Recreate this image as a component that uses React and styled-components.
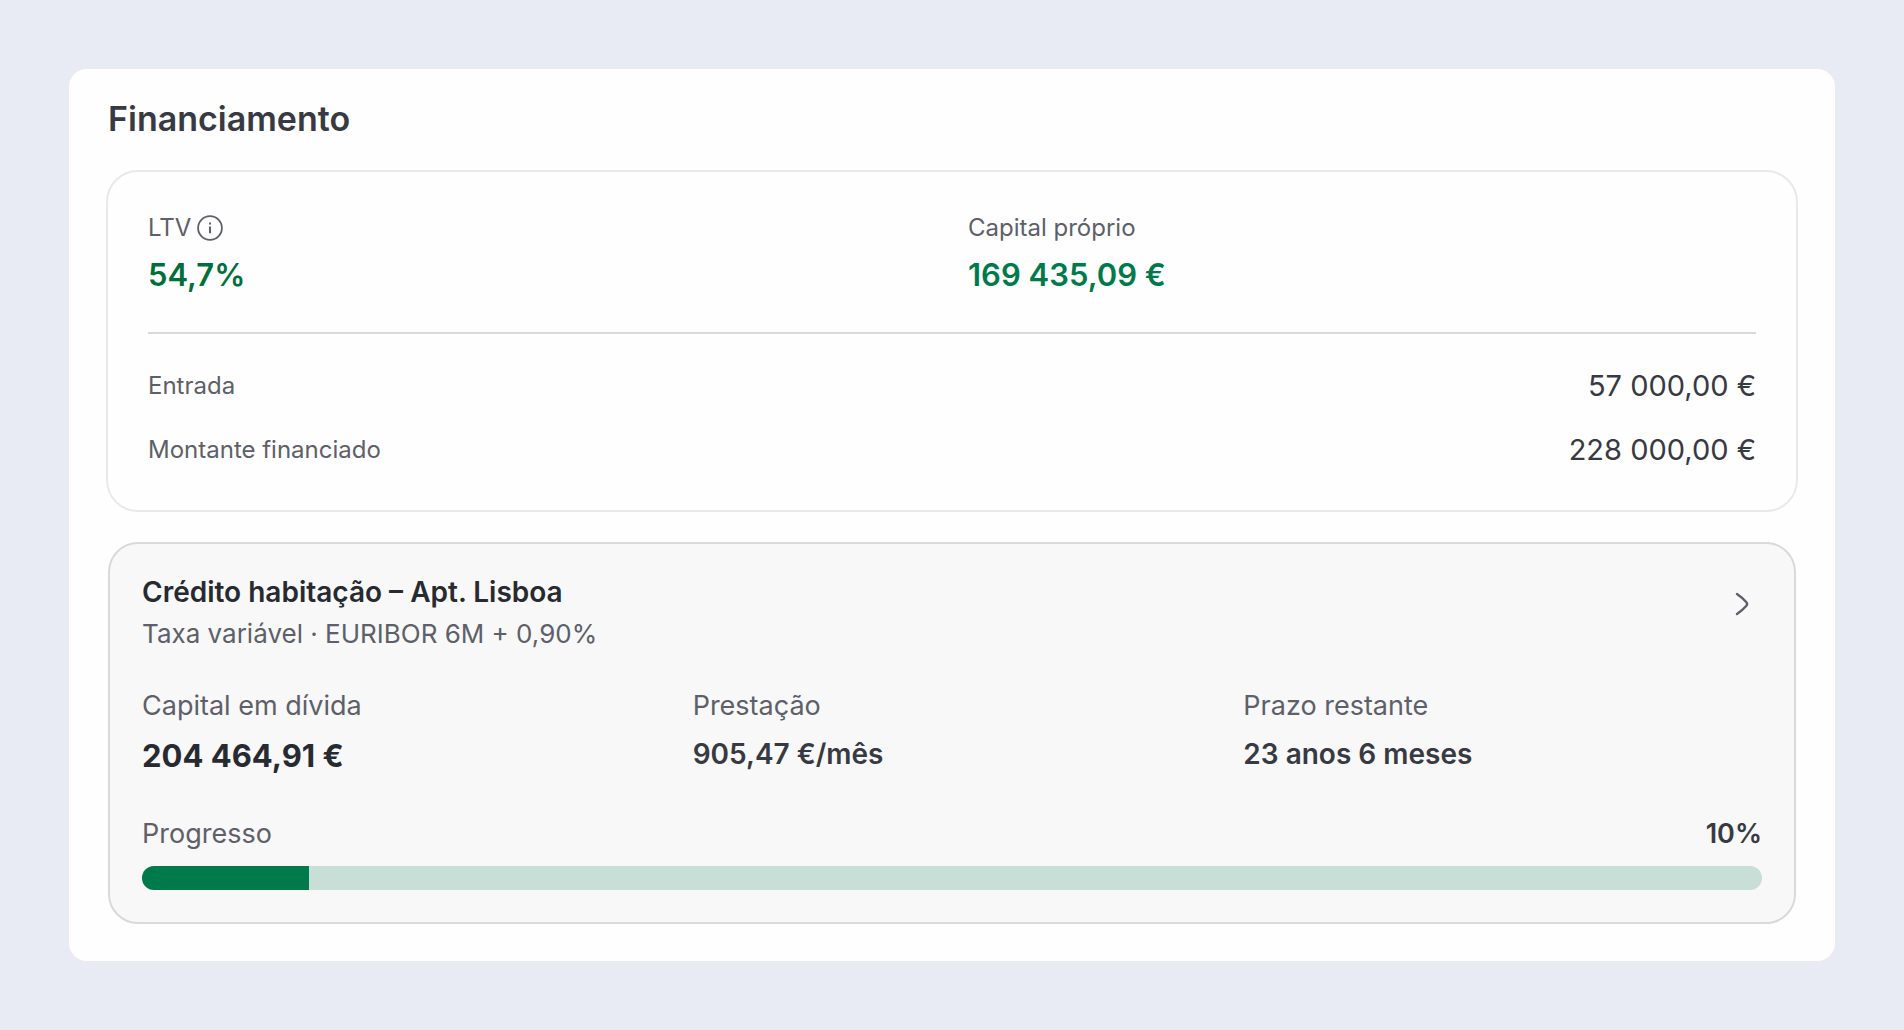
import React from 'react';
import styled, { createGlobalStyle, ThemeProvider } from 'styled-components';

const theme = {
  page: '#e8ebf4',
  panel: '#fefefe',
  muted: '#f8f8f8',
  line: '#d9d9d9',
  lineLight: '#e9e9e9',
  ink: '#272a31',
  text: '#373a42',
  label: '#5d6068',
  green: '#007a4b',
  greenDark: '#006f3c',
  greenLight: '#c7dfd7',
};

const GlobalStyle = createGlobalStyle`
  *, *::before, *::after {
    box-sizing: border-box;
  }
  body {
    margin: 0;
    background-color: ${theme.page};
    font-family: Inter, 'Open Sans', sans-serif;
  }
  h2, h3, p, dl, dt, dd {
    margin: 0;
  }
`;

const Page = styled.main`
  min-height: 100vh;
  padding: 69px;
`;

const Panel = styled.section`
  padding: 28px 37px 37px;
  border-radius: 18px;
  background-color: ${({ theme }) => theme.panel};
`;

const Title = styled.h2`
  margin: 0 2px 29px;
  color: ${({ theme }) => theme.text};
  font-size: 34px;
  font-weight: 600;
  line-height: 44px;
`;

const Card = styled.section`
  padding: 40px 40px 42px;
  border: 2px solid ${({ theme }) => theme.lineLight};
  border-radius: 32px;
`;

const LoanCard = styled.article`
  margin: 30px 2px 0;
  padding: 30px 32px 32px;
  border: 2px solid ${({ theme }) => theme.line};
  border-radius: 30px;
  background-color: ${({ theme }) => theme.muted};
`;

const Columns = styled.dl`
  display: grid;
  grid-template-columns: repeat(${({ $count }) => $count}, 1fr);
  column-gap: 32px;
`;

const Column = styled.div`
  display: flex;
  flex-direction: column;
  gap: 12px;
`;

const SmallLabel = styled.dt`
  display: flex;
  align-items: center;
  gap: 6px;
  color: ${({ theme }) => theme.label};
  font-size: 24px;
  line-height: 32px;
`;

const Label = styled.dt`
  color: ${({ theme }) => theme.label};
  font-size: 27px;
  line-height: 36px;
`;

const Highlight = styled.dd`
  color: ${({ theme, $dark }) => ($dark ? theme.greenDark : theme.green)};
  font-size: 31px;
  font-weight: 600;
  line-height: 38px;
`;

const Amount = styled.dd`
  color: ${({ theme }) => theme.text};
  font-size: 29px;
  line-height: 36px;
`;

const Value = styled.dd`
  color: ${({ theme, $big }) => ($big ? theme.ink : theme.text)};
  font-size: ${({ $big }) => ($big ? 31 : 28)}px;
  font-weight: ${({ $big }) => ($big ? 700 : 600)};
  line-height: ${({ $big }) => ($big ? 40 : 36)}px;
`;

const Divider = styled.hr`
  height: 2px;
  margin: 38px 0 34px;
  border: 0;
  background-color: ${({ theme }) => theme.line};
`;

const Rows = styled.dl`
  display: flex;
  flex-direction: column;
  gap: 28px;
`;

const Row = styled.div`
  display: flex;
  justify-content: space-between;
  align-items: center;
`;

const LoanHeader = styled.header`
  display: flex;
  justify-content: space-between;
  align-items: flex-start;
  margin-bottom: 36px;
`;

const LoanName = styled.h3`
  color: ${({ theme }) => theme.ink};
  font-size: 28px;
  font-weight: 600;
  line-height: 36px;
`;

const LoanRate = styled.p`
  margin-top: 6px;
  color: ${({ theme }) => theme.label};
  font-size: 26px;
  line-height: 36px;
`;

const IconButton = styled.button`
  display: flex;
  align-items: center;
  justify-content: center;
  padding: 0;
  border: 0;
  background: none;
  color: ${({ theme }) => theme.label};
  cursor: pointer;
`;

const OpenButton = styled(IconButton)`
  width: 40px;
  height: 60px;
`;

const ProgressHeader = styled.div`
  display: flex;
  justify-content: space-between;
  margin: 40px 0 14px;
  font-size: 27px;
  line-height: 36px;
  color: ${({ theme }) => theme.label};
`;

const Percent = styled.span`
  color: ${({ theme }) => theme.text};
  font-weight: 600;
`;

const Track = styled.div`
  height: 24px;
  overflow: hidden;
  border-radius: 12px;
  background-color: ${({ theme }) => theme.greenLight};
`;

const Fill = styled.div`
  height: 100%;
  background-color: ${({ theme }) => theme.green};
`;

const InfoIcon = () => (
  <svg width="26" height="26" viewBox="0 0 26 26" fill="none" aria-hidden="true">
    <circle cx="13" cy="13" r="11.9" stroke="currentColor" strokeWidth="1.8" />
    <path d="M13 11.6v6.6M13 7.4v2" stroke="currentColor" strokeWidth="2" />
  </svg>
);

const ChevronIcon = () => (
  <svg width="40" height="40" viewBox="0 0 40 40" fill="none" aria-hidden="true">
    <path
      d="M15 10q5.6 3.8 9.4 8.2 1.4 1.8 0 3.6Q20.6 26.2 15 30"
      stroke="currentColor"
      strokeWidth="2.4"
      strokeLinecap="round"
      strokeLinejoin="round"
    />
  </svg>
);

const details = [
  { label: 'Entrada', value: '57 000,00 €' },
  { label: 'Montante financiado', value: '228 000,00 €' },
];

const loan = {
  name: 'Crédito habitação – Apt. Lisboa',
  rate: 'Taxa variável · EURIBOR 6M + 0,90%',
  stats: [
    { label: 'Capital em dívida', value: '204 464,91 €', big: true },
    { label: 'Prestação', value: '905,47 €/mês' },
    { label: 'Prazo restante', value: '23 anos 6 meses' },
  ],
  paid: 10.3,
};

const App = () => (
  <ThemeProvider theme={theme}>
    <GlobalStyle />
    <Page>
      <Panel>
        <Title>Financiamento</Title>
        <Card>
          <Columns $count={2}>
            <Column>
              <SmallLabel>
                LTV
                <IconButton type="button" aria-label="Informação sobre LTV">
                  <InfoIcon />
                </IconButton>
              </SmallLabel>
              <Highlight $dark>54,7%</Highlight>
            </Column>
            <Column>
              <SmallLabel>Capital próprio</SmallLabel>
              <Highlight>169 435,09 €</Highlight>
            </Column>
          </Columns>
          <Divider />
          <Rows>
            {details.map(({ label, value }) => (
              <Row key={label}>
                <SmallLabel>{label}</SmallLabel>
                <Amount>{value}</Amount>
              </Row>
            ))}
          </Rows>
        </Card>
        <LoanCard>
          <LoanHeader>
            <div>
              <LoanName>{loan.name}</LoanName>
              <LoanRate>{loan.rate}</LoanRate>
            </div>
            <OpenButton type="button" aria-label="Abrir crédito">
              <ChevronIcon />
            </OpenButton>
          </LoanHeader>
          <Columns $count={3}>
            {loan.stats.map(({ label, value, big }) => (
              <Column key={label}>
                <Label>{label}</Label>
                <Value $big={big}>{value}</Value>
              </Column>
            ))}
          </Columns>
          <ProgressHeader>
            <span id="progress-label">Progresso</span>
            <Percent>{Math.floor(loan.paid)}%</Percent>
          </ProgressHeader>
          <Track
            role="progressbar"
            aria-labelledby="progress-label"
            aria-valuenow={loan.paid}
            aria-valuemin={0}
            aria-valuemax={100}
          >
            <Fill style={{ width: `${loan.paid}%` }} />
          </Track>
        </LoanCard>
      </Panel>
    </Page>
  </ThemeProvider>
);

export default App;
